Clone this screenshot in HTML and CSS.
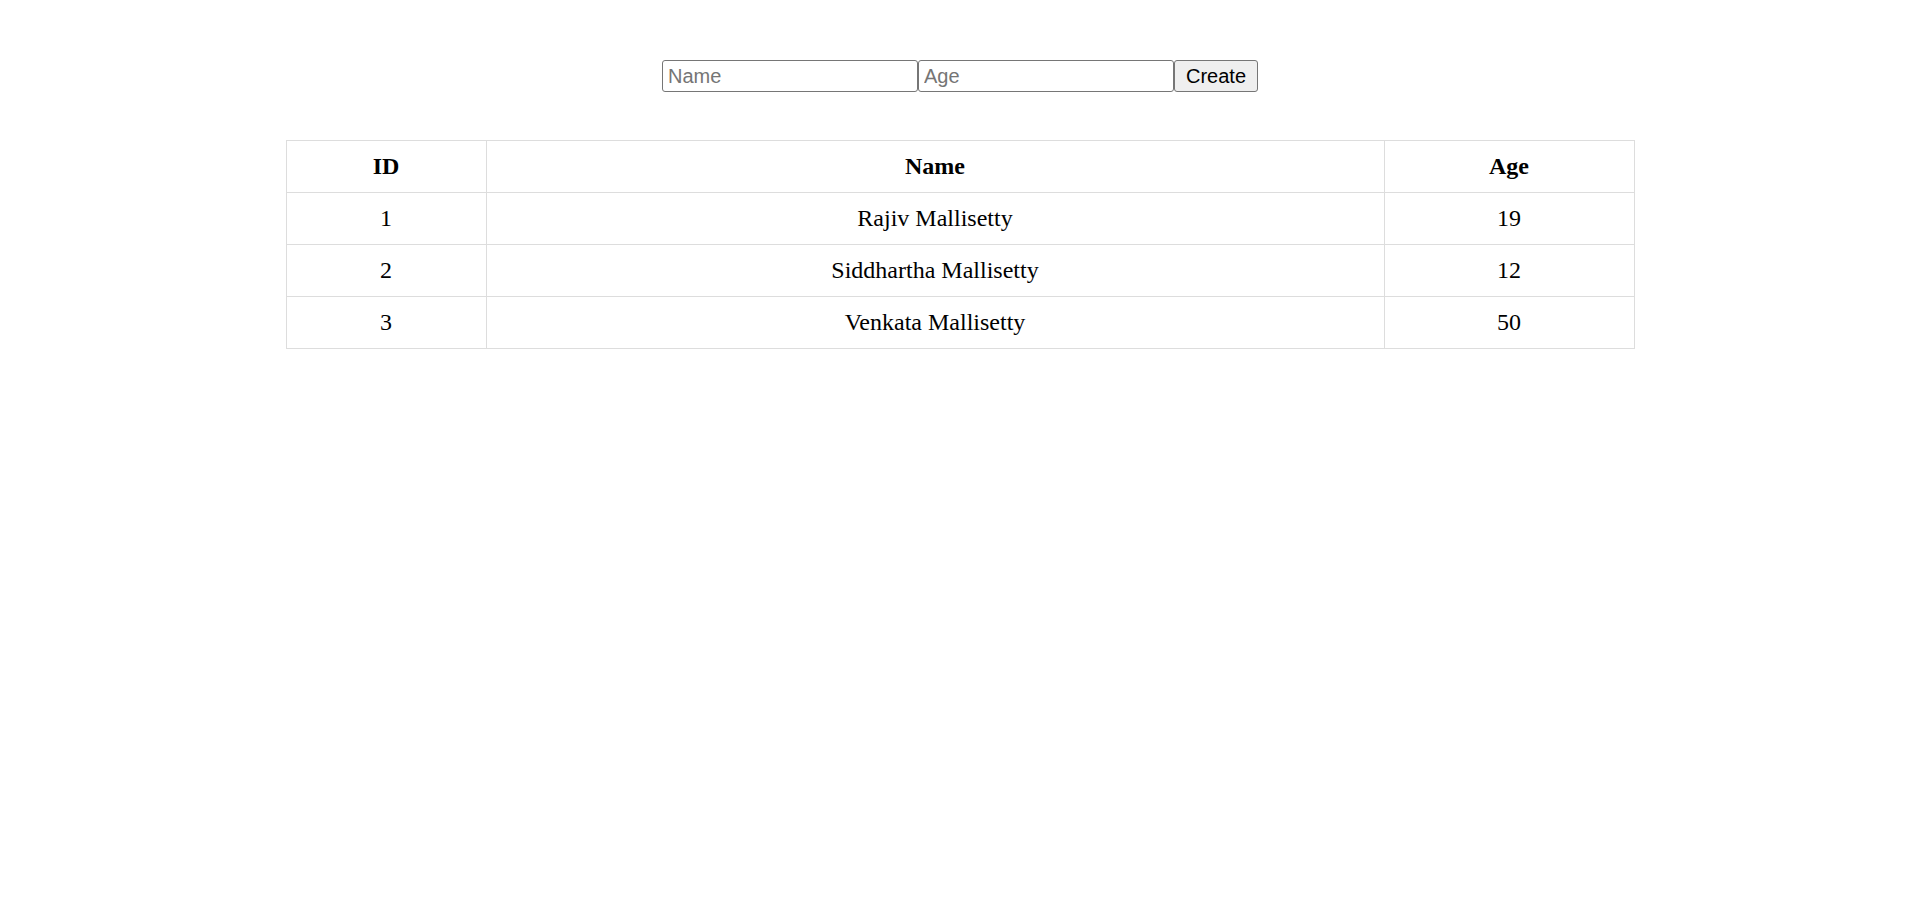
FILE: index.html
```html
<!DOCTYPE html>
<html>
<head>
<meta charset="utf-8">
<link rel="stylesheet" href="styles.css">
</head>
<body>
<div class="app">
  <form class="create-form">
    <input class="field" type="text" placeholder="Name">
    <input class="field" type="text" placeholder="Age">
    <button class="create-btn" type="button">Create</button>
  </form>
  <table class="people">
    <thead>
      <tr><th class="col-id">ID</th><th class="col-name">Name</th><th class="col-age">Age</th></tr>
    </thead>
    <tbody>
      <tr><td>1</td><td>Rajiv Mallisetty</td><td>19</td></tr>
      <tr><td>2</td><td>Siddhartha Mallisetty</td><td>12</td></tr>
      <tr><td>3</td><td>Venkata Mallisetty</td><td>50</td></tr>
    </tbody>
  </table>
</div>
</body>
</html>
```
FILE: styles.css
```css
html, body {
  margin: 0;
  padding: 0;
  background: #fff;
}
.app {
  padding-top: 60px;
  display: flex;
  flex-direction: column;
  align-items: center;
  font-family: "Liberation Serif", "Times New Roman", serif;
}
.create-form {
  display: flex;
  margin: 0 0 48px 0;
}
.field {
  box-sizing: border-box;
  width: 256px;
  height: 32px;
  margin: 0;
  padding: 1px 5px;
  border: 1px solid #767676;
  border-radius: 3px;
  font-family: "Liberation Sans", Arial, sans-serif;
  font-size: 20px;
  color: #000;
}
.field::placeholder {
  color: #757575;
}
.create-btn {
  box-sizing: border-box;
  height: 32px;
  margin: 0;
  padding: 1px 11px;
  border: 1px solid #767676;
  border-radius: 3px;
  background: #efefef;
  font-family: "Liberation Sans", Arial, sans-serif;
  font-size: 20px;
  color: #000;
}
.people {
  width: 1349px;
  border-collapse: collapse;
  font-size: 24px;
  color: #000;
}
.people th, .people td {
  border: 1px solid #ddd;
  height: 52px;
  padding: 0;
  text-align: center;
  box-sizing: border-box;
}
.col-id { width: 200px; }
.col-age { width: 250px; }
```
